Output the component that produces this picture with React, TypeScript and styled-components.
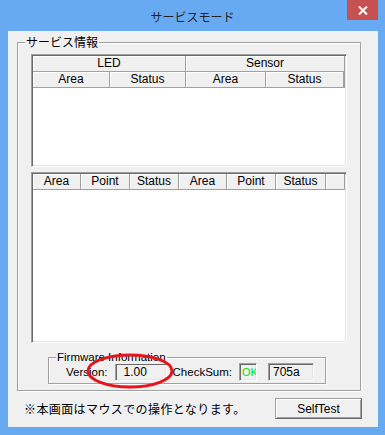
import React from "react";
import styled, { createGlobalStyle } from "styled-components";

const GlobalStyle = createGlobalStyle`
  html, body {
    margin: 0;
    padding: 0;
    background: #68aaf2;
  }
  body {
    font-family: "Liberation Sans", "Noto Sans CJK JP", sans-serif;
    font-size: 12px;
    color: #000;
  }
`;

const ledCols = [
  { label: "Area", w: 77 },
  { label: "Status", w: 76 },
  { label: "Area", w: 80 },
  { label: "Status", w: 78 },
];

const detailCols = [
  { label: "Area", w: 48 },
  { label: "Point", w: 49 },
  { label: "Status", w: 49 },
  { label: "Area", w: 48 },
  { label: "Point", w: 49 },
  { label: "Status", w: 50 },
];

const App = () => {
  return (
    <Window>
      <GlobalStyle />
      <TitleBar>
        <Title>サービスモード</Title>
        <CloseButton>
          <svg width="10" height="9" viewBox="0 0 10 9">
            <path d="M1 0.5 L9 8.5 M9 0.5 L1 8.5" stroke="#fff" strokeWidth="2" />
          </svg>
        </CloseButton>
      </TitleBar>
      <Client>
        <GroupBox>
          <GroupLabel>サービス情報</GroupLabel>
          <ListView $height={113}>
            <HeaderRow>
              <HeaderCell $w={153}>LED</HeaderCell>
              <HeaderCell $grow>Sensor</HeaderCell>
            </HeaderRow>
            <HeaderRow>
              {ledCols.map((c, i) => (
                <HeaderCell key={i} $w={c.w}>
                  {c.label}
                </HeaderCell>
              ))}
              <HeaderCell $grow />
            </HeaderRow>
          </ListView>
          <ListView $height={171}>
            <HeaderRow>
              {detailCols.map((c, i) => (
                <HeaderCell key={i} $w={c.w}>
                  {c.label}
                </HeaderCell>
              ))}
              <HeaderCell $grow />
            </HeaderRow>
          </ListView>
          <FirmwareBox>
            <FirmwareLabel>Firmware Information</FirmwareLabel>
            <FieldLabel>Version:</FieldLabel>
            <ReadOnlyBox $w={52} $pad={8}>1.00</ReadOnlyBox>
            <FieldLabel $gap={6}>CheckSum:</FieldLabel>
            <ReadOnlyBox $w={18} $pad={2} $ok>
              OK
            </ReadOnlyBox>
            <ReadOnlyBox $w={46} $pad={4} $gap={11}>
              705a
            </ReadOnlyBox>
            <Ellipse width="88" height="36" viewBox="0 0 88 36">
              <ellipse cx="44" cy="18" rx="42" ry="16" fill="none" stroke="#e8141c" strokeWidth="3" />
            </Ellipse>
          </FirmwareBox>
        </GroupBox>
        <BottomRow>
          <Note>※本画面はマウスでの操作となります。</Note>
          <PushButton>SelfTest</PushButton>
        </BottomRow>
      </Client>
    </Window>
  );
};

const Window = styled.div`
  width: 385px;
  height: 435px;
  display: flex;
  flex-direction: column;
  background: #68aaf2;
`;

const TitleBar = styled.div`
  position: relative;
  height: 31px;
  display: flex;
  align-items: center;
  justify-content: center;
`;

const Title = styled.div`
  font-family: "Noto Sans CJK JP", sans-serif;
  font-size: 12px;
  color: #222;
  margin-top: 1px;
`;

const CloseButton = styled.div`
  position: absolute;
  top: 0;
  right: 7px;
  width: 31px;
  height: 20px;
  background: #c75050;
  display: flex;
  align-items: center;
  justify-content: center;
`;

const Client = styled.div`
  margin: 0 7px 0 8px;
  height: 396px;
  background: #f0f0f0;
  padding: 11px 0 0 9px;
  box-sizing: border-box;
  display: flex;
  flex-direction: column;
`;

const GroupBox = styled.div`
  position: relative;
  width: 344px;
  height: 349px;
  box-sizing: border-box;
  border: 1px solid #a0a0a0;
  box-shadow: 1px 1px 0 #fff, inset 1px 1px 0 #fff;
  padding: 11px 0 0 13px;
  display: flex;
  flex-direction: column;
`;

const GroupLabel = styled.span`
  position: absolute;
  top: -9px;
  left: 7px;
  padding: 0 1px;
  background: #f0f0f0;
  font-family: "Noto Sans CJK JP", sans-serif;
  font-size: 12px;
  line-height: 16px;
`;

const ListView = styled.div<{ $height: number }>`
  width: 316px;
  height: ${(p) => p.$height}px;
  box-sizing: border-box;
  background: #fff;
  border: 1px solid;
  border-color: #a0a0a0 #fff #fff #a0a0a0;
  box-shadow: inset 1px 1px 0 #696969, inset -1px -1px 0 #e3e3e3;
  padding: 1px;
  margin-bottom: 5px;
  display: flex;
  flex-direction: column;
`;

const HeaderRow = styled.div`
  display: flex;
  height: 16px;
`;

const HeaderCell = styled.div<{ $w?: number; $grow?: boolean }>`
  ${(p) => (p.$grow ? "flex: 1;" : `width: ${p.$w}px; flex: none;`)}
  box-sizing: border-box;
  background: #f0f0f0;
  border-right: 1px solid #a0a0a0;
  border-bottom: 1px solid #a0a0a0;
  box-shadow: inset 1px 1px 0 #fff;
  text-align: center;
  line-height: 15px;
  font-size: 12px;
  white-space: nowrap;
  overflow: hidden;
`;

const FirmwareBox = styled.div`
  position: relative;
  margin: 9px 0 0 17px;
  width: 278px;
  height: 27px;
  box-sizing: border-box;
  border: 1px solid #a0a0a0;
  box-shadow: 1px 1px 0 #fff, inset 1px 1px 0 #fff;
  padding: 5px 0 0 17px;
  display: flex;
  align-items: flex-start;
  font-size: 11px;
`;

const FirmwareLabel = styled.span`
  position: absolute;
  top: -8px;
  left: 7px;
  padding: 0 1px;
  background: #f0f0f0;
  line-height: 14px;
  font-size: 11.5px;
`;

const FieldLabel = styled.span<{ $gap?: number }>`
  margin-left: ${(p) => p.$gap ?? 0}px;
  margin-right: 7px;
  line-height: 18px;
  font-size: 11.5px;
`;

const ReadOnlyBox = styled.div<{ $w: number; $pad: number; $ok?: boolean; $gap?: number }>`
  width: ${(p) => p.$w}px;
  height: 18px;
  flex: none;
  margin-left: ${(p) => p.$gap ?? 0}px;
  box-sizing: border-box;
  border: 1px solid;
  border-color: #a0a0a0 #fff #fff #a0a0a0;
  box-shadow: inset 1px 1px 0 #696969, inset -1px -1px 0 #e3e3e3;
  background: #f0f0f0;
  padding-left: ${(p) => p.$pad}px;
  line-height: 16px;
  font-size: ${(p) => (p.$ok ? 11 : 12)}px;
  color: ${(p) => (p.$ok ? "#00e000" : "#000")};
  white-space: nowrap;
  overflow: hidden;
`;

const Ellipse = styled.svg`
  position: absolute;
  left: 37px;
  top: -5px;
  pointer-events: none;
`;

const BottomRow = styled.div`
  display: flex;
  align-items: center;
  justify-content: space-between;
  margin-top: 7px;
  padding: 0 16px 0 7px;
`;

const Note = styled.span`
  font-family: "Noto Sans CJK JP", sans-serif;
  font-size: 12px;
  letter-spacing: 0.4px;
`;

const PushButton = styled.button`
  width: 87px;
  height: 21px;
  box-sizing: border-box;
  padding: 0;
  background: #f0f0f0;
  font-family: "Liberation Sans", sans-serif;
  font-size: 12px;
  color: #000;
  border: 1px solid;
  border-color: #a0a0a0 #696969 #696969 #a0a0a0;
  box-shadow: inset 1px 1px 0 #fff, inset -1px -1px 0 #a0a0a0;
`;

export default App;
